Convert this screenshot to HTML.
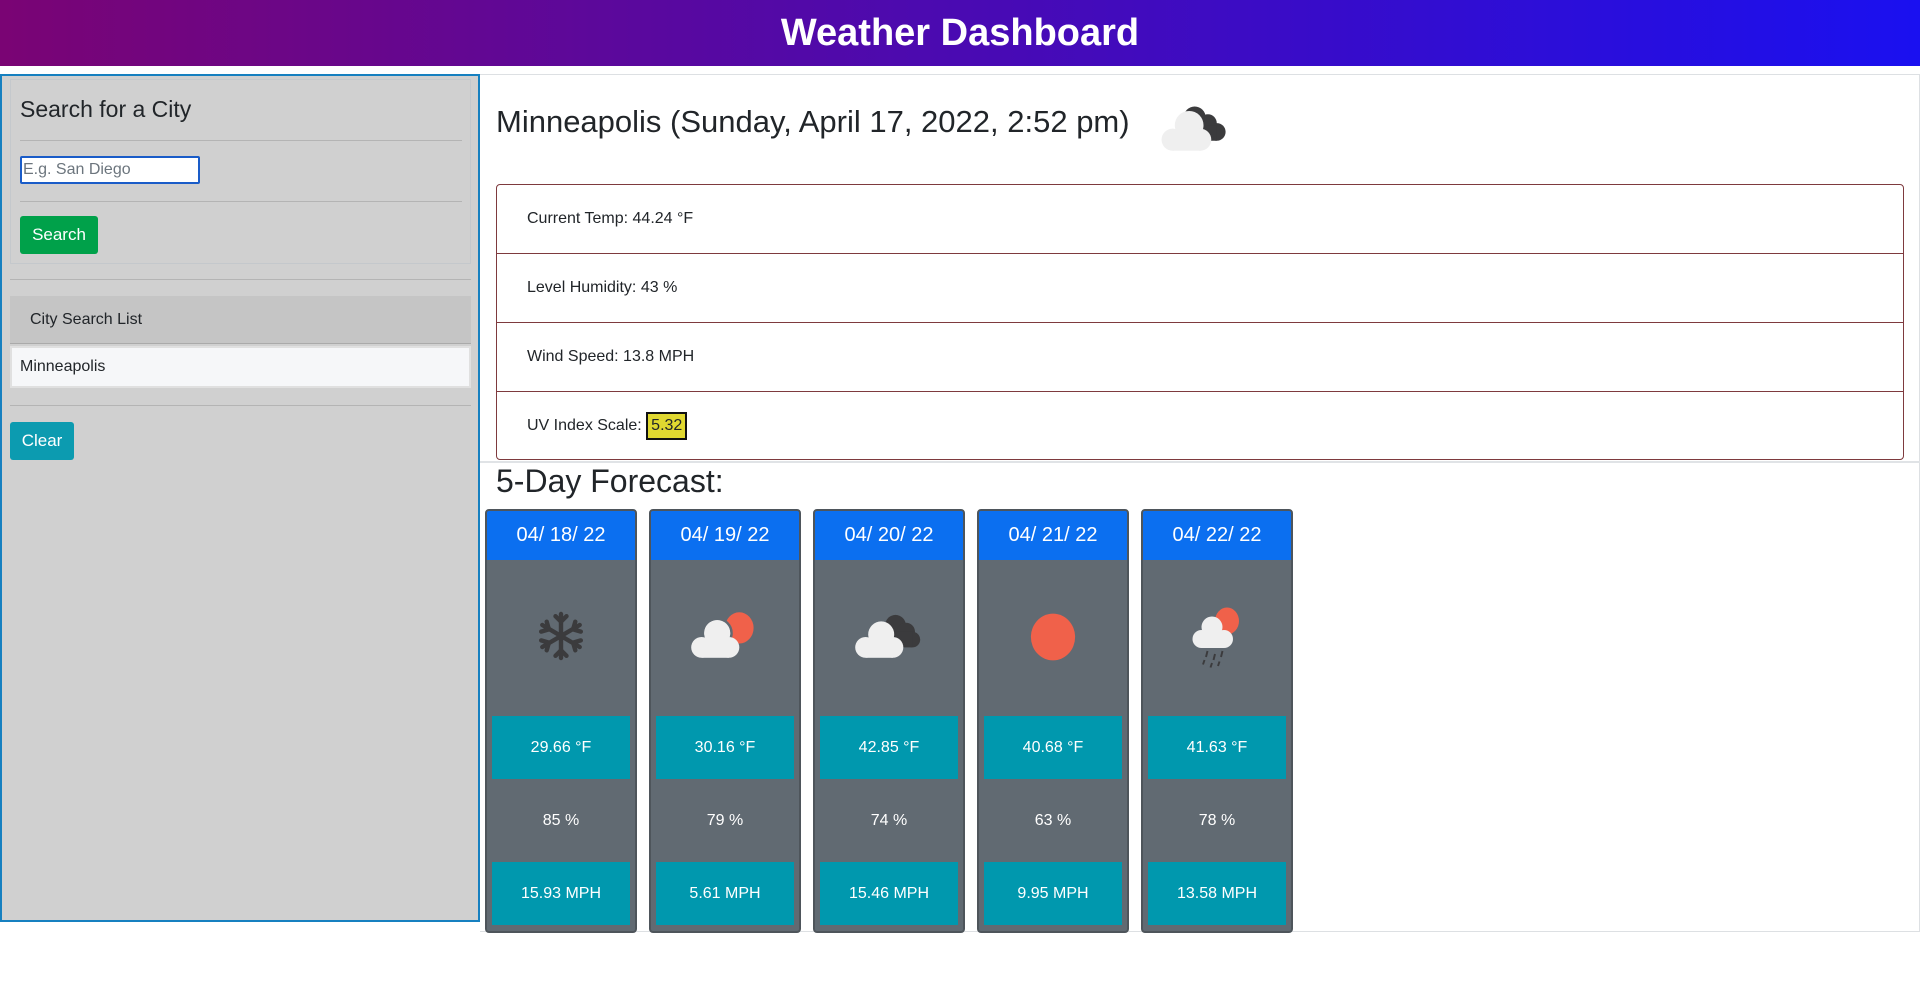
<!DOCTYPE html>
<html><head><meta charset="utf-8"><style>
*{box-sizing:border-box;margin:0;padding:0}
body{width:1920px;height:999px;background:#fff;font-family:"Liberation Sans",sans-serif;color:#212529;position:relative;overflow:hidden}
.hdr{position:absolute;left:0;top:0;width:1920px;height:66px;background:linear-gradient(90deg,#7a0474,#1a10f0);color:#fff;font-weight:bold;font-size:38px;text-align:center;line-height:66px}
.left{position:absolute;left:0;top:74px;width:480px;height:848px;background:#d0d0d0;border:2px solid #1680c0}
.card1{position:absolute;left:8px;top:3px;width:461px;height:185px;border:1px solid #c4c8cc}
.h4{position:absolute;left:18px;top:20px;font-size:23px;color:#212529}
.hr{position:absolute;height:1px;background:#b4b4b4}
.inp{position:absolute;left:18px;top:80px;width:180px;height:28px;background:#fff;border:2px solid #1a5cc8;border-radius:2px;font-size:16px;color:#6c757d;line-height:24px;padding-left:1px}
.btn{position:absolute;color:#fff;font-size:17px;border-radius:3px;text-align:center}
.main{position:absolute;left:480px;top:74px;width:1440px;height:858px;border:1px solid #dde0e3;border-left:none}
.title{position:absolute;left:16px;top:29px;font-size:31px;color:#212529}
.list{position:absolute;left:16px;top:109px;width:1408px;height:276px;border:1px solid #7e3a3e;border-radius:4px}
.row{height:69px;border-bottom:1px solid #7e3a3e;font-size:16px;line-height:68px;padding-left:30px}
.row:last-child{border-bottom:none}
.uv{display:inline-block;background:#e0d830;border:2px solid #111;padding:0 3px;line-height:24px;height:28px}
.sep{position:absolute;left:0;top:386px;width:1440px;height:2px;background:#e0e3e6}
.fc{position:absolute;left:16px;top:388px;font-size:32px}
.fcard{position:absolute;top:434px;width:152px;height:424px;background:#616a72;border:2px solid #4e555b;border-radius:4px;overflow:hidden;color:#fff;text-align:center}
.fh{height:49px;background:#0b6ff0;font-size:20px;line-height:48px}
.tb{position:absolute;left:5px;width:138px;height:63px;background:#0098ae;font-size:16px;line-height:63px}
.hu{position:absolute;left:0;width:148px;top:301px;font-size:16px}
.ic{position:absolute;left:22px;top:87px}
</style></head><body>
<div class="hdr">Weather Dashboard</div>
<div class="left">
 <div class="card1">
  <div class="h4" style="left:9px;top:16px">Search for a City</div>
  <div class="hr" style="left:9px;top:60px;width:442px"></div>
  <div class="inp" style="left:9px;top:76px">E.g. San Diego</div>
  <div class="hr" style="left:9px;top:121px;width:442px"></div>
  <div class="btn" style="left:9px;top:136px;width:78px;height:38px;line-height:38px;background:#00a14a">Search</div>
 </div>
 <div class="hr" style="left:8px;top:203px;width:461px"></div>
 <div style="position:absolute;left:8px;top:220px;width:461px;height:48px;background:#c5c5c5;border-bottom:1px solid #aaa;font-size:16px;line-height:48px;padding-left:20px">City Search List</div>
 <div style="position:absolute;left:8px;top:270px;width:461px;height:42px;background:#f6f7f9;border:2px solid #e0e0e0;font-size:16px;line-height:38px;padding-left:8px">Minneapolis</div>
 <div class="hr" style="left:8px;top:329px;width:461px"></div>
 <div class="btn" style="left:8px;top:346px;width:64px;height:38px;line-height:38px;background:#0c9bb0">Clear</div>
</div>
<div class="main">
 <div class="title">Minneapolis (Sunday, April 17, 2022, 2:52 pm)</div>
 <svg style="position:absolute;left:678px;top:26px" width="80" height="53" viewBox="0 0 72 48">
  <g fill="#3b3b3d"><circle cx="33" cy="15" r="10"/><circle cx="45" cy="20" r="8"/><circle cx="53" cy="28" r="8"/><rect x="30" y="22" width="23" height="14"/></g>
  <g fill="#efefef"><circle cx="28" cy="22" r="13"/><circle cx="13" cy="35" r="10"/><circle cx="38" cy="35" r="10"/><rect x="13" y="30" width="26" height="15"/></g>
 </svg>
 <div class="list">
  <div class="row">Current Temp: 44.24 °F</div>
  <div class="row">Level Humidity: 43 %</div>
  <div class="row">Wind Speed: 13.8 MPH</div>
  <div class="row">UV Index Scale: <span class="uv">5.32</span></div>
 </div>
 <div class="sep"></div>
 <div class="fc">5-Day Forecast:</div>

 <div class="fcard" style="left:5px"><div class="fh">04/ 18/ 22</div>
  <svg class="ic" style="left:30px;top:92px" width="88" height="66" viewBox="0 0 80 60"><g stroke="#3b3b3d" stroke-width="4" stroke-linecap="round" fill="none"><line x1="40" y1="10" x2="40" y2="50"/><line x1="23" y1="20" x2="57" y2="40"/><line x1="23" y1="40" x2="57" y2="20"/><path d="M35 12l5 5 5-5M35 48l5-5 5 5M22 26l7-2-2-7M58 34l-7 2 2 7M22 34l7 2-2 7M58 26l-7-2 2-7"/></g><circle cx="40" cy="30" r="4" fill="#3b3b3d"/></svg>
  <div class="tb" style="top:205px">29.66 °F</div><div class="hu">85 %</div><div class="tb" style="top:351px">15.93 MPH</div></div>

 <div class="fcard" style="left:169px"><div class="fh">04/ 19/ 22</div>
  <svg class="ic" width="104" height="78" viewBox="0 0 80 60"><ellipse cx="51" cy="23" rx="11" ry="12" fill="#f0614a"/><g fill="#efefef" stroke="#616a72" stroke-width="2"><circle cx="34" cy="27" r="11"/></g><g fill="#efefef"><circle cx="34" cy="27" r="10"/><circle cx="22" cy="38" r="8"/><circle cx="43" cy="38" r="8"/><rect x="22" y="34" width="21" height="12"/></g></svg>
  <div class="tb" style="top:205px">30.16 °F</div><div class="hu">79 %</div><div class="tb" style="top:351px">5.61 MPH</div></div>

 <div class="fcard" style="left:333px"><div class="fh">04/ 20/ 22</div>
  <svg class="ic" width="104" height="78" viewBox="0 0 80 60"><g fill="#3b3b3d"><circle cx="45" cy="21" r="8"/><circle cx="53" cy="26" r="7"/><circle cx="58" cy="32" r="6"/><rect x="43" y="26" width="15" height="12"/></g><g fill="#efefef"><circle cx="34" cy="28" r="10"/><circle cx="22" cy="38" r="8"/><circle cx="43" cy="38" r="8"/><rect x="22" y="34" width="21" height="12"/></g></svg>
  <div class="tb" style="top:205px">42.85 °F</div><div class="hu">74 %</div><div class="tb" style="top:351px">15.46 MPH</div></div>

 <div class="fcard" style="left:497px"><div class="fh">04/ 21/ 22</div>
  <svg class="ic" width="104" height="78" viewBox="0 0 80 60"><ellipse cx="40" cy="30" rx="17" ry="18" fill="#f0614a"/></svg>
  <div class="tb" style="top:205px">40.68 °F</div><div class="hu">63 %</div><div class="tb" style="top:351px">9.95 MPH</div></div>

 <div class="fcard" style="left:661px"><div class="fh">04/ 22/ 22</div>
  <svg class="ic" style="left:12px;top:80px" width="120" height="90" viewBox="0 0 80 60"><ellipse cx="48" cy="20" rx="8" ry="9" fill="#f0614a"/><g fill="#efefef"><circle cx="38" cy="24" r="7"/><circle cx="31" cy="32" r="6"/><circle cx="46" cy="32" r="6"/><rect x="31" y="28" width="15" height="10"/></g><g stroke="#3b3b3d" stroke-width="1.3"><line x1="35" y1="40" x2="34" y2="44"/><line x1="40" y1="42" x2="39" y2="46"/><line x1="45" y1="40" x2="44" y2="44"/><line x1="33" y1="46" x2="32" y2="49"/><line x1="38" y1="48" x2="37" y2="51"/><line x1="43" y1="47" x2="42" y2="50"/></g></svg>
  <div class="tb" style="top:205px">41.63 °F</div><div class="hu">78 %</div><div class="tb" style="top:351px">13.58 MPH</div></div>
</div>
</body></html>
